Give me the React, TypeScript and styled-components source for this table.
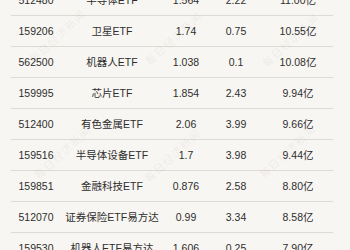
import React from "react";
import styled, { createGlobalStyle } from "styled-components";

const Global = createGlobalStyle`
  html, body { margin: 0; padding: 0; background: #f8f6f2; }
  body { width: 350px; height: 250px; overflow: hidden; }
`;

const Page = styled.div`
  position: relative;
  width: 350px;
  height: 250px;
  overflow: hidden;
  background: #f8f6f2;
  font-family: "Liberation Sans", "Noto Sans CJK SC", sans-serif;
  color: #2e2e2e;
`;

const Table = styled.div`
  margin: -15px 0 0 11px;
  width: 322px;
`;

const Row = styled.div<{ $last?: boolean }>`
  display: grid;
  grid-template-columns: 50px 102px 46px 54px 70px;
  height: 30px;
  align-items: center;
  border-bottom: 1px solid ${(p) => (p.$last ? "transparent" : "#dedbd6")};
`;

const Cell = styled.div`
  text-align: center;
  font-size: 10.5px;
  line-height: 12px;
  white-space: nowrap;
`;

const Mark = styled.div`
  position: absolute;
  font-family: "DejaVu Serif", "Noto Sans CJK SC", serif;
  font-weight: bold;
  font-size: 11px;
  letter-spacing: 1px;
  color: rgba(0, 0, 0, 0.045);
  transform: translate(-50%, -50%) rotate(-43deg);
  white-space: nowrap;
  pointer-events: none;
`;

const rows = [
  ["512480", "半导体ETF", "1.564", "2.22", "11.00亿"],
  ["159206", "卫星ETF", "1.74", "0.75", "10.55亿"],
  ["562500", "机器人ETF", "1.038", "0.1", "10.08亿"],
  ["159995", "芯片ETF", "1.854", "2.43", "9.94亿"],
  ["512400", "有色金属ETF", "2.06", "3.99", "9.66亿"],
  ["159516", "半导体设备ETF", "1.7", "3.98", "9.44亿"],
  ["159851", "金融科技ETF", "0.876", "2.58", "8.80亿"],
  ["512070", "证券保险ETF易方达", "0.99", "3.34", "8.58亿"],
  ["159530", "机器人ETF易方达", "1.606", "0.25", "7.90亿"],
];

const marks = [
  [57, 36], [173, 38], [290, 40],
  [62, 152], [172, 155], [287, 151],
];

export default function App() {
  return (
    <Page>
      <Global />
      <Table>
        {rows.map((r, i) => (
          <Row key={r[0]} $last={i === rows.length - 1}>
            {r.map((c, j) => (
              <Cell key={j}>{c}</Cell>
            ))}
          </Row>
        ))}
      </Table>
      {marks.map(([x, y], i) => (
        <Mark key={i} style={{ left: x, top: y }}>每日经济新闻</Mark>
      ))}
    </Page>
  );
}
